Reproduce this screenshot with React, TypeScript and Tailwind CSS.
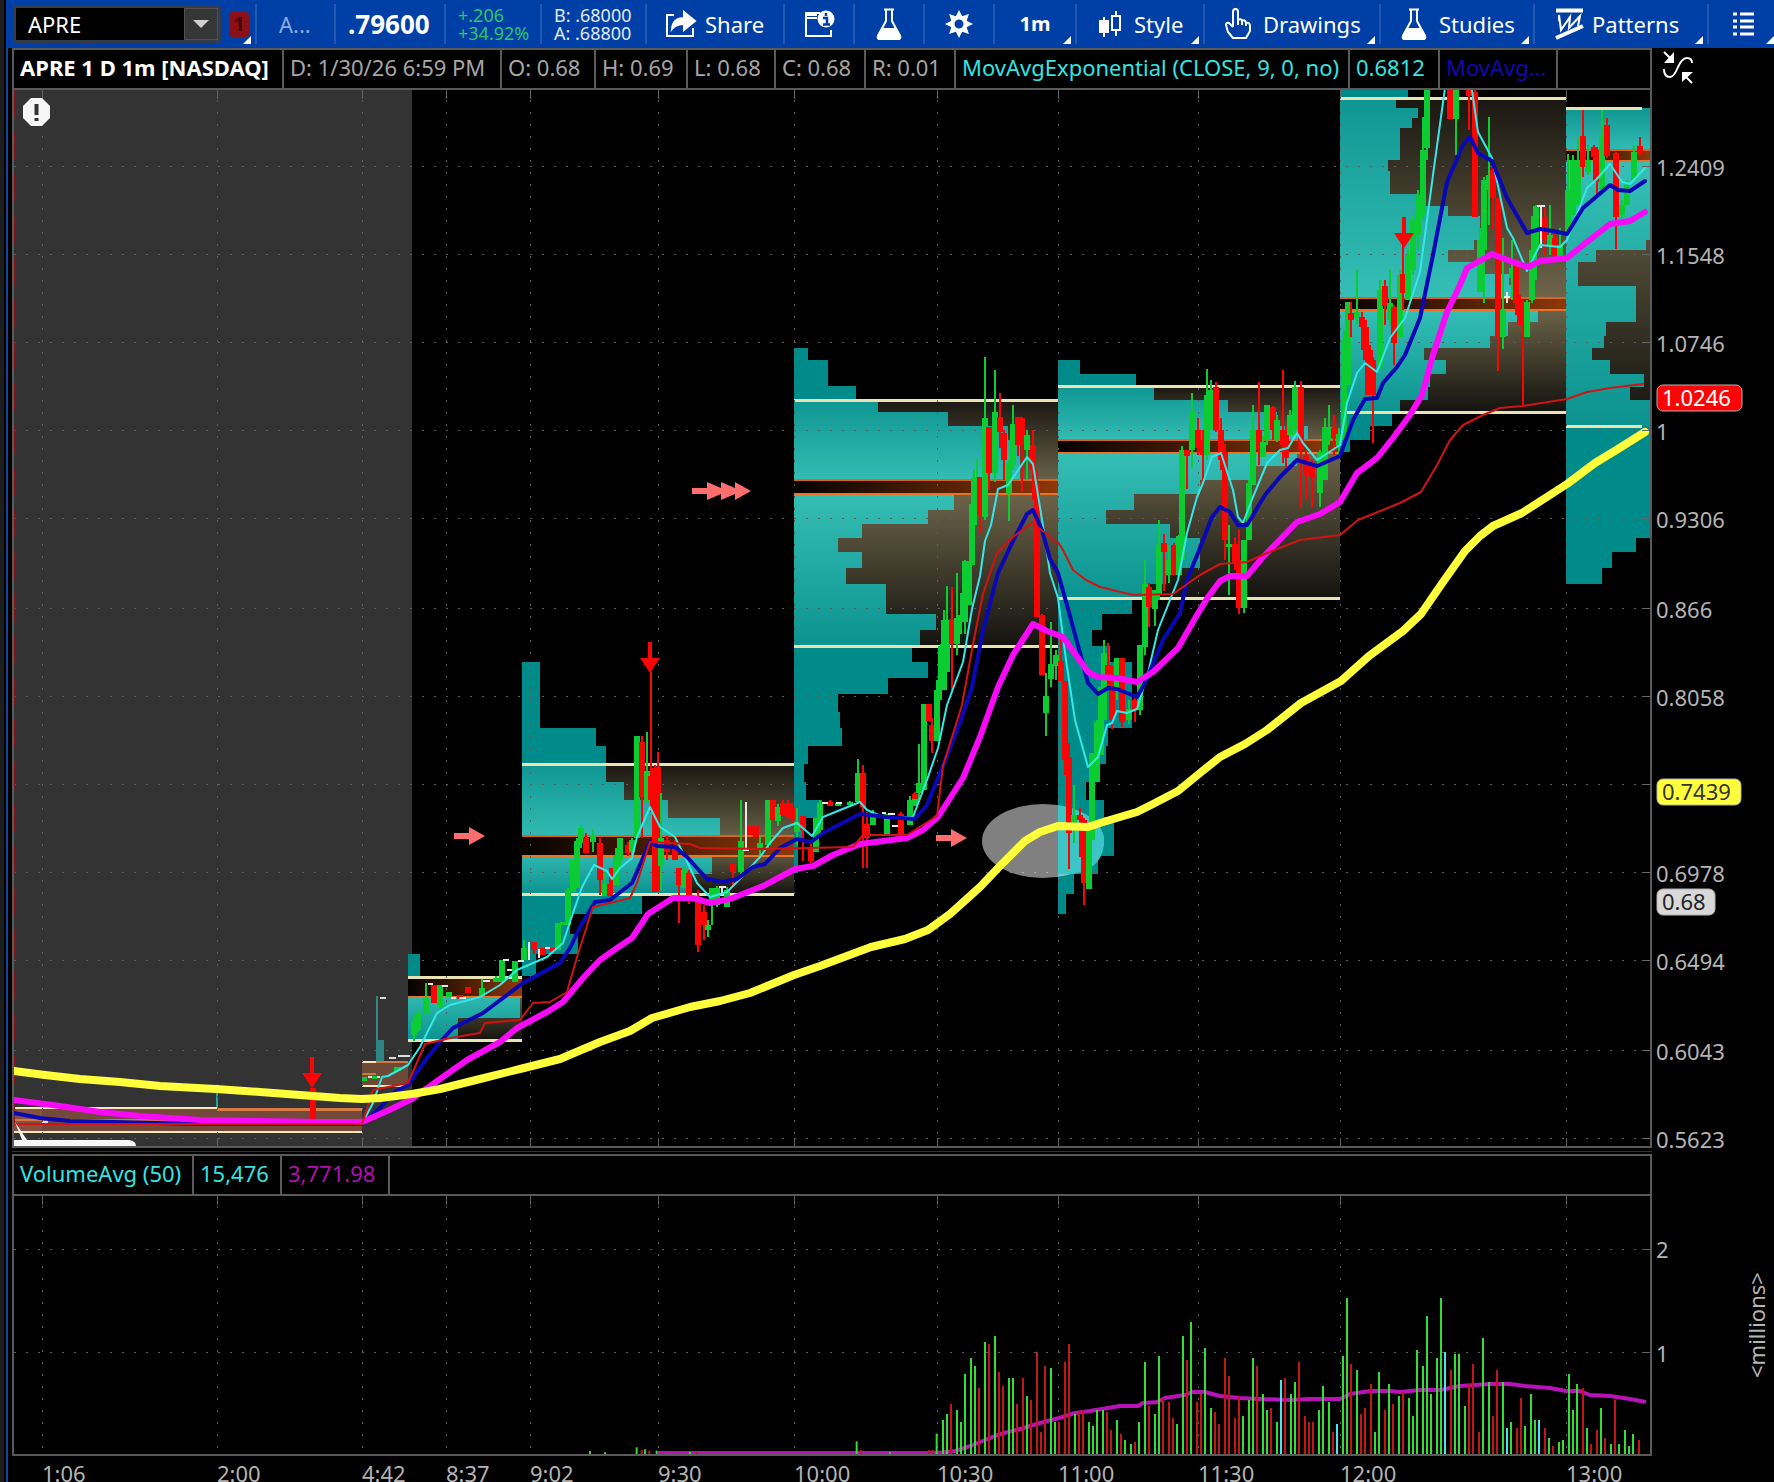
import type { ReactNode } from 'react';

type Row = [number, number];
type Profile = {
  id: string;
  x0: number;
  x1: number;
  vah: number;
  poc: [number, number];
  val: number;
  end: number;
  rows: Row[];
};

const GRID_X = [42, 217, 362, 446, 530, 658, 794, 937, 1058, 1198, 1340, 1566];
const TIME_LABELS = ['1:06', '2:00', '4:42', '8:37', '9:02', '9:30', '10:00', '10:30', '11:00', '11:30', '12:00', '13:00'];

const PRICE_TICKS: [number, string][] = [
  [166, '1.2409'],
  [254, '1.1548'],
  [342, '1.0746'],
  [430, '1'],
  [518, '0.9306'],
  [608, '0.866'],
  [696, '0.8058'],
  [784, ''],
  [872, '0.6978'],
  [960, '0.6494'],
  [1050, '0.6043'],
  [1138, '0.5623'],
];

// rows: [top, right edge] of each volume-at-price step
const PROFILES: Profile[] = [
  {
    id: 'p837', x0: 408, x1: 522, vah: 977, poc: [978, 997], val: 1040, end: 1040,
    rows: [[954, 420], [977, 408], [997, 520], [1018, 458]],
  },
  {
    id: 'p902', x0: 522, x1: 794, vah: 764, poc: [836, 856], val: 894, end: 976,
    rows: [[662, 540], [728, 596], [746, 606], [764, 606], [782, 624], [800, 668], [818, 720], [856, 712], [874, 690], [894, 642], [914, 570], [934, 578], [954, 536]],
  },
  {
    id: 'p1000', x0: 794, x1: 1058, vah: 400, poc: [480, 494], val: 646, end: 873,
    rows: [[348, 808], [360, 828], [386, 856], [400, 878], [412, 948], [426, 1008], [440, 1020], [494, 954], [510, 928], [524, 862], [538, 838], [552, 862], [568, 846], [584, 886], [614, 936], [630, 920], [646, 912], [662, 928], [678, 888], [694, 838], [712, 840], [728, 842], [746, 808], [764, 804], [782, 806], [800, 822], [818, 804], [838, 798]],
  },
  {
    id: 'p1100', x0: 1058, x1: 1340, vah: 386, poc: [440, 453], val: 598, end: 914,
    rows: [[360, 1080], [374, 1136], [386, 1154], [400, 1228], [412, 1277], [426, 1308], [453, 1297], [466, 1250], [480, 1200], [494, 1134], [510, 1106], [524, 1170], [538, 1200], [568, 1166], [584, 1150], [598, 1132], [614, 1102], [630, 1092], [646, 1110], [662, 1132], [728, 1108], [746, 1106], [764, 1100], [782, 1086], [800, 1104], [817, 1114], [856, 1098], [874, 1074], [894, 1066]],
  },
  {
    id: 'p1200', x0: 1340, x1: 1566, vah: 98, poc: [298, 310], val: 412, end: 452,
    rows: [[90, 1408], [98, 1396], [108, 1418], [118, 1412], [128, 1400], [160, 1388], [171, 1390], [194, 1418], [206, 1448], [216, 1480], [240, 1474], [250, 1448], [262, 1485], [274, 1509], [285, 1513], [310, 1538], [322, 1508], [336, 1490], [348, 1424], [360, 1446], [374, 1430], [387, 1428], [400, 1400], [412, 1392], [426, 1370], [440, 1350]],
  },
  {
    id: 'p1300', x0: 1566, x1: 1650, vah: 108, poc: [150, 161], val: 426, end: 584,
    rows: [[108, 1650], [161, 1650], [240, 1646], [250, 1596], [262, 1578], [286, 1636], [322, 1606], [336, 1604], [348, 1592], [360, 1610], [374, 1644], [387, 1630], [400, 1650], [426, 1650], [538, 1636], [552, 1612], [568, 1602]],
  },
];

// color x high bodyTop bodyBottom low
const CANDLES = `
g 414 1016 1021 1035 1041|g 418 1010 1013 1030 1032|g 426 983 998 1014 1014|r 434 985 985 1003 1003|g 440 985 985 1007 1007
g 449 992 992 997 997|r 460 995 995 999 999|r 468 987 987 993 993|g 482 979 988 996 996|g 496 976 978 982 982
g 502 960 960 982 982|g 515 961 961 982 982|g 524 940 948 960 960|r 534 942 942 950 954|r 543 948 948 955 955|r 552 948 948 951 951
g 558 923 923 950 950|g 563 922 922 925 925|g 568 888 890 925 925|g 573 860 860 892 892|g 577 838 841 888 888|g 581 825 828 843 848
r 586 833 838 853 853|g 593 829 835 842 852|r 600 838 843 880 895|g 605 870 884 896 896|r 610 868 884 896 896|r 612 868 868 878 884
g 616 848 855 885 885|g 620 838 838 860 865|r 628 842 845 853 856|g 632 838 840 852 858|g 637 736 736 838 838|r 642 736 742 797 838
g 647 732 771 802 802|r 651 672 776 800 812|r 655 765 768 892 892|r 658 752 767 890 892|g 661 793 838 866 890|r 667 836 840 852 860
r 675 840 845 860 860|r 679 868 868 885 923|g 684 868 870 888 888|r 689 870 873 898 904|r 698 890 897 945 952|r 704 905 912 925 940
g 708 920 925 930 937|g 712 888 888 900 925|g 717 886 888 905 907|g 727 887 890 907 907|r 733 863 864 872 885|g 741 800 841 872 875
r 750 826 826 835 835|r 756 826 826 837 837|g 760 836 843 850 855|g 768 800 800 845 850|r 773 800 800 820 820|g 778 804 807 821 826
r 783 800 803 815 815|r 788 800 803 818 818|r 792 803 808 820 826|g 797 808 822 832 845|r 803 816 816 830 861|r 811 843 849 861 863
g 816 818 818 852 852|g 820 800 803 830 836|r 830 800 802 806 806|g 838 802 803 806 806|g 850 801 802 805 805|g 858 759 773 802 802
r 863 765 773 807 868|r 867 812 824 838 868|g 873 810 816 825 825|g 887 814 814 836 836|r 901 812 814 835 835|g 910 796 800 825 825
g 915 793 798 806 806|r 915 792 794 799 799|g 919 744 783 793 800|g 924 704 704 790 790|r 929 704 704 721 721|r 932 718 725 741 753
g 937 680 690 741 741|g 941 644 646 690 700|g 944 610 620 690 690|g 947 586 620 672 672|r 952 587 619 644 690|g 957 573 618 644 655
g 961 593 615 622 634|g 965 560 561 622 634|g 969 561 561 605 605|g 972 494 504 565 565|g 974 470 478 525 525|g 977 459 480 504 504
r 980 477 477 515 533|g 985 357 418 517 520|r 989 427 427 473 490|g 995 370 412 473 482|r 1000 393 417 432 448|r 1004 430 433 460 480
g 1009 460 463 494 521|g 1013 405 424 465 470|r 1018 417 417 445 456|r 1022 417 418 445 492|g 1027 430 435 450 480|r 1033 430 445 470 500
r 1037 470 484 617 617|r 1042 614 615 675 675|g 1046 673 696 713 736|g 1051 622 664 679 687|g 1056 650 655 666 680
r 1061 640 661 681 681|r 1065 681 681 760 775|r 1069 743 757 833 869|g 1074 785 815 823 843|r 1080 808 815 820 857|r 1084 818 820 883 905
g 1089 825 825 889 889|g 1092 753 753 840 840|g 1097 720 722 782 782|g 1101 687 687 755 755|g 1104 640 653 720 720|r 1108 643 665 675 690
r 1112 665 675 720 729|g 1117 658 658 690 700|r 1122 658 658 722 727|g 1129 700 709 720 724|r 1135 694 700 710 722|g 1140 645 645 710 715
g 1145 560 584 647 655|r 1149 583 587 607 627|g 1155 590 590 609 626|g 1159 520 545 595 600|r 1164 534 543 552 591|g 1169 545 560 575 583
r 1174 543 545 575 575|g 1179 535 536 575 575|g 1182 446 450 560 560|r 1187 450 450 456 489|g 1192 393 412 450 468|r 1198 418 430 448 455
r 1203 430 440 455 485|g 1207 369 395 455 460|g 1211 380 390 430 430|r 1216 382 387 430 432|r 1221 418 430 460 470|r 1225 444 452 540 560
g 1229 525 544 547 595|r 1235 537 544 562 570|r 1239 530 560 608 614|g 1244 540 540 608 613|g 1249 480 483 540 540|g 1253 405 430 485 485
r 1259 382 430 450 465|g 1263 436 442 457 457|g 1267 405 405 440 445|r 1273 406 407 430 440|g 1277 415 420 440 442|r 1283 370 430 445 463
r 1286 426 433 458 467|g 1290 410 415 435 435|g 1295 381 387 430 435|r 1301 381 387 450 507|r 1306 450 455 475 500|r 1312 460 465 478 507
g 1320 450 452 493 507|g 1325 418 427 480 480|g 1329 405 427 440 445|r 1334 415 428 438 455|g 1339 428 434 446 455
g 1344 330 340 440 440|g 1348 302 302 385 385|r 1351 302 313 320 337|g 1357 270 312 318 325|r 1362 312 317 327 350|r 1366 320 327 360 395
r 1370 345 350 395 395|r 1373 357 360 395 443|g 1380 280 290 365 370|r 1385 280 286 306 325|g 1390 270 303 320 326|r 1394 305 307 343 365
g 1400 270 275 337 337|r 1403 245 274 293 310|g 1408 250 255 300 300|g 1413 215 220 270 275|g 1418 190 195 235 250|g 1423 117 150 215 220
g 1427 90 90 148 160|r 1450 90 90 119 119|g 1456 90 90 119 155|r 1469 90 90 96 130|r 1475 90 92 217 217|g 1480 228 240 292 292
g 1484 177 180 250 303|g 1489 117 175 190 225|r 1493 165 170 198 230|r 1498 198 198 337 371|g 1503 238 310 337 349|g 1512 240 268 278 300
r 1516 262 265 303 315|r 1520 295 300 325 325|r 1523 300 306 320 405|g 1527 300 302 337 337|g 1532 216 250 300 303|g 1536 205 206 250 280
r 1545 205 217 240 255|g 1550 205 235 245 255|r 1555 234 238 255 258|g 1560 228 245 256 258|g 1568 154 190 235 235|g 1573 155 160 215 215
g 1578 138 160 205 205|r 1583 110 136 167 177|g 1588 145 160 172 175|r 1594 145 147 157 180|r 1597 147 150 182 195|g 1602 110 135 190 190
r 1607 118 125 156 158|r 1616 152 153 217 249|g 1622 200 205 215 218|g 1627 180 185 205 205|g 1634 146 152 180 180|r 1640 137 146 154 156`
  .trim()
  .split(/[|\n]/)
  .map((c) => c.split(' '));

const YELLOW = '14,1071 45,1075 80,1079 120,1082 160,1086 216,1089 260,1092 300,1095 340,1098 362,1099 380,1098 412,1094 440,1089 480,1079 520,1069 560,1059 600,1042 630,1031 652,1018 690,1007 720,1001 750,993 794,975 820,966 871,947 905,939 928,930 950,914 980,887 1000,866 1025,841 1040,832 1058,826 1088,827 1100,823 1120,817 1137,812 1153,804 1178,791 1200,773 1220,757 1245,744 1267,730 1301,703 1341,681 1369,656 1403,631 1421,614 1443,582 1465,551 1480,536 1493,526 1522,513 1567,484 1595,463 1618,449 1645,432';
const MAGENTA = '14,1100 60,1106 100,1112 140,1116 200,1120 260,1121 320,1122 362,1122 385,1112 412,1099 440,1079 467,1060 500,1042 517,1028 547,1012 563,1002 583,978 600,960 617,948 632,938 648,914 673,898 693,898 710,903 730,899 763,886 795,869 813,866 833,855 860,844 907,838 923,830 938,817 963,778 980,737 998,687 1013,655 1033,624 1047,631 1063,637 1078,658 1088,672 1098,677 1117,678 1137,682 1153,672 1178,648 1197,615 1208,597 1220,581 1230,576 1247,576 1263,557 1297,522 1320,514 1340,502 1357,473 1377,458 1393,438 1410,415 1422,395 1433,355 1447,312 1460,285 1467,268 1492,254 1513,262 1528,267 1540,261 1567,258 1587,242 1610,224 1630,221 1645,212';
const BLUE = '14,1113 40,1118 70,1121 200,1124 300,1124 362,1124 380,1108 395,1092 408,1085 427,1058 440,1042 453,1028 483,1013 523,983 560,963 570,948 580,927 595,902 610,900 632,883 650,842 657,846 675,847 687,857 707,879 723,882 737,879 753,867 765,864 780,848 797,839 811,842 823,833 860,814 887,817 915,819 927,805 940,773 960,723 972,687 983,630 998,573 1013,541 1027,514 1033,510 1042,530 1050,559 1058,573 1070,616 1080,653 1088,683 1098,694 1108,688 1117,689 1137,697 1145,683 1163,640 1180,613 1187,580 1200,548 1212,517 1220,507 1230,512 1238,525 1247,525 1265,495 1280,477 1297,460 1317,466 1340,456 1353,420 1365,399 1377,398 1383,383 1397,367 1405,355 1420,318 1433,255 1447,182 1463,145 1470,137 1478,153 1492,161 1507,198 1527,233 1540,229 1553,231 1567,234 1583,208 1610,185 1618,190 1630,191 1645,181';
const CYAN = '365,1118 373,1103 382,1077 388,1076 408,1065 420,1047 437,1013 450,1005 480,997 500,985 517,970 547,957 563,943 573,913 582,887 594,865 607,871 612,879 620,868 632,858 637,837 650,807 660,827 675,837 683,853 697,883 710,897 727,892 737,882 760,857 770,843 783,828 797,823 812,836 823,817 860,802 867,810 883,817 913,817 927,780 938,748 947,705 963,662 972,609 980,576 985,541 991,525 998,489 1008,485 1027,457 1033,464 1043,526 1050,573 1058,598 1066,660 1075,720 1088,767 1098,757 1107,725 1112,723 1117,711 1127,713 1137,709 1148,673 1158,630 1178,580 1187,533 1197,497 1203,483 1212,457 1221,453 1233,490 1238,517 1243,523 1253,497 1267,463 1280,450 1288,448 1297,433 1303,443 1317,460 1340,445 1347,403 1357,373 1365,363 1377,372 1390,338 1405,318 1420,272 1433,175 1445,88 1455,60 1468,60 1472,90 1478,132 1492,158 1507,228 1513,238 1527,271 1540,245 1560,247 1567,240 1587,188 1595,181 1610,164 1622,182 1630,184 1645,168';
const VWAP = '14,1124 362,1124 373,1090 408,1083 425,1044 450,1038 480,1033 485,1023 520,1020 533,1003 550,1002 567,992 577,957 593,907 610,903 630,898 637,883 650,842 690,844 700,848 760,849 853,847 863,835 907,835 937,816 943,766 962,705 973,644 983,594 997,553 1013,537 1032,523 1047,534 1053,541 1058,542 1063,550 1073,570 1086,580 1100,587 1133,595 1173,594 1200,575 1220,564 1247,562 1267,553 1300,540 1340,535 1358,520 1400,503 1421,492 1437,465 1450,440 1463,425 1483,415 1500,408 1523,406 1567,399 1587,392 1610,388 1643,384';
const VOLUME_AVG = '658,1453 937,1453 955,1451 970,1446 985,1440 1000,1434 1020,1429 1040,1423 1059,1418 1075,1413 1090,1411 1120,1406 1138,1406 1143,1403 1157,1402 1165,1398 1185,1395 1192,1392 1205,1392 1220,1396 1240,1398 1260,1399 1290,1400 1310,1399 1340,1399 1350,1394 1370,1391 1390,1391 1400,1392 1420,1390 1440,1390 1460,1386 1490,1384 1510,1384 1525,1386 1550,1388 1566,1391 1580,1391 1590,1395 1610,1396 1630,1399 1646,1402';

// color, x, height, in thirds of a chart unit from x=900
const VOLUME = `g110 61 g129 102 g141 120 r153 150 g171 132 g183 96 g195 240 g213 288 g225 264 r237 198 g255 336 r267 330 g285 354 r297 246 r309 204 g327 228 g339 228 r351 150 r369 228 g381 174 r393 162 r411 306 r423 66 r435 264 g453 258 g465 96 r477 96 r495 276 r507 330 g525 120 r537 127 r549 132 g567 96 g579 84 g591 132 g609 132 r621 126 r633 72 g651 102 r663 60 g675 42 g693 30 r705 36 g717 96 g735 276 r747 144 g765 120 g777 294 r789 168 r807 156 r819 108 g831 90 g849 354 r861 282 g873 396 r891 156 r903 180 g915 318 g933 138 r945 126 r957 90 r975 288 r987 234 r1005 108 r1017 174 g1029 114 g1047 162 g1059 288 r1071 264 g1089 180 g1101 132 r1113 138 g1131 96 c1143 222 r1155 228 g1173 180 g1185 216 r1197 276 r1215 114 r1227 96 r1239 96 g1257 132 g1269 204 g1287 156 r1299 66 c1311 90 g1329 294 g1341 468 r1353 270 g1371 252 r1383 120 r1395 138 r1413 210 g1425 66 g1437 246 r1455 132 g1467 210 r1479 150 g1497 174 r1509 186 g1527 168 g1539 114 g1551 312 g1569 264 g1581 414 g1593 180 g1611 288 g1623 468 c1635 306 r1653 252 g1665 300 g1677 300 g1695 144 r1707 210 r1719 270 r1737 66 g1749 348 g1767 216 r1779 114 r1791 252 g1809 216 c1821 78 g1833 96 r1851 78 r1863 168 g1875 84 g1893 180 g1905 102 c1917 102 r1935 78 g1947 48 r1959 24 g1977 36 g1989 42 g2007 240 g2019 132 g2031 210 r2049 198 g2061 78 r2073 30 r2091 72 g2103 138 r2115 48 g2133 30 r2145 162 g2157 30 g2175 72 g2187 24 g2199 60 r2217 42 r87 12 r99 12 g-930 9 g-885 5 g-790 20 r-775 12 g-765 14 r-752 10 g-730 10 g-630 6 r-610 7 g-130 38 r-118 12 g-30 5`
  .split(/ (?=[grc])/)
  .map((b) => {
    const [x, h] = b.slice(1).split(' ').map(Number);
    return { color: b[0], x: 900 + x / 3, h: h / 3 };
  });

const CANDLE_FILL: Record<string, string> = { g: '#0ccc33', r: '#fa0505' };
const VOLUME_FILL: Record<string, string> = { g: '#33dd33', r: '#c01818', c: '#4be3f0' };

function MoreMark() {
  return (
    <svg className="absolute right-1 bottom-0 size-[8px]" viewBox="0 0 8 8">
      <path d="M8 0V8H0Z" fill="#fff" />
    </svg>
  );
}

function ToolButton({ className, label, icon, text, more }: { className: string; label: string; icon?: ReactNode; text?: string; more?: boolean }) {
  return (
    <button type="button" aria-label={label} className={`relative flex h-10 shrink-0 items-center border-r-2 border-[#2357b0] text-white ${className}`}>
      {icon}
      {text && <span>{text}</span>}
      {more && <MoreMark />}
    </button>
  );
}

function FlaskIcon() {
  return (
    <svg className="h-[32px] w-[26px]" viewBox="0 0 26 32" fill="none" stroke="#fff" strokeWidth="2">
      <path d="M8 1.5H18M10 2V13L2 28Q1 31 4 31H22Q25 31 24 28L16 13V2" />
      <path d="M6 21H20L24 28Q25 31 22 31H4Q1 31 2 28Z" fill="#fff" />
    </svg>
  );
}

function Toolbar() {
  return (
    <header className="flex h-12 items-center overflow-hidden bg-[#0040a6] pl-[7px]">
      <div className="flex h-[38px] w-[208px] shrink-0 items-center rounded-sm border-[3px] border-[#333b4c] bg-black">
        <input aria-label="Symbol" defaultValue="APRE" className="w-0 flex-1 bg-transparent pl-3 text-[22px] text-white outline-none" />
        <button type="button" aria-label="Symbol list" className="flex h-[32px] w-[34px] items-center justify-center border border-[#505050] bg-[#363636]">
          <svg className="h-[8px] w-[16px]" viewBox="0 0 16 8">
            <path d="M0 0H16L8 8Z" fill="#d0d0d0" />
          </svg>
        </button>
      </div>
      <button type="button" aria-label="Link group 1" className="relative flex h-10 w-[36px] shrink-0 items-center border-r-2 border-[#2357b0] pl-2">
        <span className="flex h-[25px] w-[20px] items-center justify-center rounded bg-[#8c1016] text-[20px] font-bold text-[#43050c]">1</span>
        <MoreMark />
      </button>
      <span className="flex h-10 w-[79px] shrink-0 items-center border-r-2 border-[#2357b0] pl-[22px] text-[#8fa9dc]">A...</span>
      <span className="flex h-10 w-[110px] shrink-0 items-center border-r-2 border-[#2357b0] pl-3 text-[26px] font-bold text-white">.79600</span>
      <span className="flex h-10 w-[96px] shrink-0 flex-col justify-center border-r-2 border-[#2357b0] pl-3 text-[18px] leading-[18px] text-[#2fc46b]">
        <span>+.206</span>
        <span>+34.92%</span>
      </span>
      <span className="flex h-10 w-[105px] shrink-0 flex-col justify-center border-r-2 border-[#2357b0] pl-3 text-[18px] leading-[18px] text-[#e0e8f8]">
        <span>B: .68000</span>
        <span>A: .68800</span>
      </span>
      <ToolButton
        className="w-[138px] gap-2 pl-[18px]"
        label="Share"
        text="Share"
        icon={
          <svg className="h-[28px] w-[32px]" viewBox="0 0 32 28" fill="none" stroke="#fff" strokeWidth="2">
            <path d="M9 5H2V26H28V18" />
            <path d="M7 19Q8 8 19 8V2L30 11L19 20V14Q11 14 7 19Z" fill="#fff" />
          </svg>
        }
      />
      <ToolButton
        className="w-[70px] justify-center"
        label="Chart info"
        icon={
          <svg className="h-[28px] w-[32px]" viewBox="0 0 32 28" fill="none" stroke="#fff" strokeWidth="2">
            <path d="M17 3H3V26H28V20M3 8H14M3 5H14" />
            <circle cx="23" cy="9" r="8.500" fill="#fff" stroke="none" />
            <path d="M23 3V6M20 8H24V14M20 14.500H27" stroke="#0040a6" strokeWidth="2.500" />
          </svg>
        }
      />
      <ToolButton className="w-[70px] justify-center" label="Study lab" icon={<FlaskIcon />} />
      <ToolButton
        className="w-[70px] justify-center"
        label="Settings"
        icon={
          <svg className="size-[28px]" viewBox="-14 -14 28 28" fill="#fff">
            {[0, 45, 90, 135, 180, 225, 270, 315].map((a) => (
              <path key={a} d="M-3.500 -7L0 -14L3.500 -7Z" transform={`rotate(${a})`} />
            ))}
            <circle r="6.500" fill="none" stroke="#fff" strokeWidth="4" />
          </svg>
        }
      />
      <ToolButton className="w-[82px] justify-center text-[20px] font-bold" label="Time frame 1 minute" text="1m" more />
      <ToolButton
        className="w-[128px] gap-3 pl-[22px]"
        label="Style"
        text="Style"
        more
        icon={
          <svg className="h-[28px] w-[23px]" viewBox="0 0 23 28" fill="none" stroke="#fff" strokeWidth="2">
            <path d="M5 7V27M17 1V6M17 20V26" />
            <path d="M1 11H9V22H1Z" fill="#fff" />
            <path d="M13 6H21V20H13Z" />
          </svg>
        }
      />
      <ToolButton
        className="w-[176px] gap-3 pl-[20px]"
        label="Drawings"
        text="Drawings"
        more
        icon={
          <svg className="h-[32px] w-[26px]" viewBox="0 0 26 32" fill="none" stroke="#fff" strokeWidth="2" strokeLinejoin="round">
            <path d="M8 19V4Q8 1 10.500 1Q13 1 13 4V12Q16 10 17 13Q20 11 21 15Q25 14 25 18V23L21 30H8L3 24L1 17Q1 14 4 15L8 19M13 12V17M17 13V17M21 15V18" />
          </svg>
        }
      />
      <ToolButton className="w-[154px] gap-3 pl-[20px]" label="Studies" text="Studies" more icon={<FlaskIcon />} />
      <ToolButton
        className="w-[174px] gap-2 pl-[20px]"
        label="Patterns"
        text="Patterns"
        more
        icon={
          <svg className="h-[32px] w-[29px]" viewBox="0 0 29 32" fill="none" stroke="#fff" strokeWidth="2">
            <path d="M1 2.500H28M1 30L28 18" strokeWidth="4" />
            <path d="M4 7L6 22L15 9L14 20L25 8L23 18M4 7V13" />
          </svg>
        }
      />
      <button type="button" aria-label="Menu" className="relative flex h-10 flex-1 items-center pl-6">
        <svg className="h-[24px] w-[21px]" viewBox="0 0 21 24" stroke="#fff" strokeWidth="3">
          <path d="M0 2H4M7 2H21M0 9H4M7 9H21M0 15H4M7 15H21M0 22H4M7 22H21" />
        </svg>
        <svg className="absolute right-0 bottom-0 size-[8px]" viewBox="0 0 8 8">
          <path d="M8 0V8H0Z" fill="#fff" />
        </svg>
      </button>
    </header>
  );
}

function StatusBar() {
  const cell = 'flex shrink-0 items-center overflow-hidden border-r-2 border-[#5a5a5a] pb-1 pl-[6px] whitespace-nowrap';
  return (
    <div className="flex h-[42px] bg-black text-[#a6a6a6]">
      <div className="flex min-w-0 flex-1 border-2 border-[#5a5a5a]">
        <h1 className={`${cell} w-[270px] font-bold text-white`}>APRE 1 D 1m [NASDAQ]</h1>
        <span className={`${cell} w-[218px]`}>D: 1/30/26 6:59 PM</span>
        <span className={`${cell} w-[94px]`}>O: 0.68</span>
        <span className={`${cell} w-[92px]`}>H: 0.69</span>
        <span className={`${cell} w-[88px]`}>L: 0.68</span>
        <span className={`${cell} w-[90px]`}>C: 0.68</span>
        <span className={`${cell} w-[90px]`}>R: 0.01</span>
        <span className={`${cell} w-[394px] text-[#35e3e0]`}>MovAvgExponential (CLOSE, 9, 0, no)</span>
        <span className={`${cell} w-[90px] text-[#35e3e0]`}>0.6812</span>
        <span className={`${cell} w-[118px] text-[#1408b0]`}>MovAvg...</span>
      </div>
      <button type="button" aria-label="Auto scale" className="flex w-[122px] items-center pb-1 pl-[10px]">
        <svg className="h-[36px] w-[32px]" viewBox="0 0 32 36" fill="none" stroke="#fff" strokeWidth="2">
          <path d="M2 20Q2 28 8 28Q12 28 16 18Q20 9 25 9Q30 9 30 14" />
          <path d="M2 3L10 11M30 34L22 26" />
          <path d="M12 3V14H2ZM20 23H31L20 33Z" fill="#fff" stroke="none" />
        </svg>
      </button>
    </div>
  );
}

function ProfileShape({ p }: { p: Profile }) {
  const span = p.val - p.vah;
  const poc = (p.poc[0] + p.poc[1]) / 2;
  const mid = (poc - p.vah) / span;
  const lineEnd = Math.min(p.x1, 1642);
  const grad = { gradientUnits: 'userSpaceOnUse' as const, x1: 0, x2: 0, y1: p.vah, y2: p.val };
  return (
    <g shapeRendering="crispEdges">
      <defs>
        <linearGradient id={`${p.id}-teal`} {...grad}>
          <stop offset="0" stopColor="#0f9693" />
          <stop offset={mid} stopColor="#36c0b6" />
          <stop offset="1" stopColor="#0c9390" />
        </linearGradient>
        <linearGradient id={`${p.id}-value`} {...grad}>
          <stop offset="0" stopColor="#1a1712" />
          <stop offset={mid} stopColor="#70674b" />
          <stop offset="1" stopColor="#14130f" />
        </linearGradient>
        <linearGradient id={`${p.id}-poc`} x1="0" x2="1">
          <stop offset="0" stopColor="#050200" />
          <stop offset="1" stopColor="#8e380a" />
        </linearGradient>
      </defs>
      <rect x={p.x0} y={p.vah} width={p.x1 - p.x0} height={span} fill={`url(#${p.id}-value)`} />
      {p.rows.map(([y, x], i) => {
        const bottom = p.rows[i + 1]?.[0] ?? p.end;
        const inside = y >= p.vah && y < p.val;
        return <rect key={y} x={p.x0} y={y} width={x - p.x0} height={bottom - y} fill={inside ? `url(#${p.id}-teal)` : '#008b8b'} />;
      })}
      <rect x={p.x0} y={p.poc[0]} width={p.x1 - p.x0} height={p.poc[1] - p.poc[0]} fill={`url(#${p.id}-poc)`} />
      <path d={`M${p.x0} ${p.poc[0]}H${p.x1}`} stroke="#d9641f" strokeWidth="2" />
      <path d={`M${p.x0} ${p.poc[1]}H${p.x1}`} stroke="#e87428" strokeWidth="2" />
      <path d={`M${p.x0} ${p.vah + 0.5}H${lineEnd}M${p.x0} ${p.val + 0.5}H${lineEnd}`} stroke="#e9e3b4" strokeWidth="3" />
    </g>
  );
}

function OvernightProfile() {
  return (
    <g shapeRendering="crispEdges">
      <rect x="14" y="1108" width="348" height="25" fill="#73493a" />
      <rect x="14" y="1108" width="28" height="25" fill="#855241" />
      <rect x="362" y="1062" width="46" height="25" fill="#6d4a38" />
      <rect x="376" y="1040" width="8" height="22" fill="#2f8583" />
      <rect x="376" y="996" width="2" height="44" fill="#3a8583" />
      <rect x="216" y="1092" width="2" height="16" fill="#1fa79f" />
      <path d="M217 1109H362" stroke="#d97b45" strokeWidth="3" />
      <path d="M14 1120H217M362 1062H408M362 1074H376" stroke="#cf7a45" strokeWidth="2" />
      <path d="M14 1108H217M14 1132H362M362 1062H376M362 1086H408" stroke="#f6e8b8" strokeWidth="2" />
      <path d="M380 998H386M389 1058H396M398 1056H410M42 1122H48M368 1077H380" stroke="#ddd" strokeWidth="2" />
      <rect x="362" y="1077" width="5" height="4" fill="#0ccc33" />
      <rect x="372" y="1076" width="5" height="3" fill="#0ccc33" />
      <rect x="394" y="1067" width="7" height="4" fill="#0ccc33" />
    </g>
  );
}

function DownArrow({ x, y }: { x: number; y: number }) {
  return <path d={`M${x - 2} ${y}h4v16h8l-10 15l-10 -15h8Z`} fill="#fa0505" />;
}

function RightArrow({ x, y }: { x: number; y: number }) {
  return <path d={`M${x} ${y - 3}h15v-6l16 9l-16 9v-6h-15Z`} fill="#ff6d6d" />;
}

function PriceTag({ y, text, width, fill, color }: { y: number; text: string; width: number; fill: string; color: string }) {
  return (
    <g>
      <rect x="1657" y={y - 13} width={width} height="26" rx="6" fill={fill} stroke="#b8b0b0" />
      <text x="1662" y={y + 8} fill={color}>{text}</text>
    </g>
  );
}

function PriceChart() {
  return (
    <svg className="block h-auto w-full bg-black text-[22px]" viewBox="12 90 1762 1064" role="img" aria-label="APRE one minute price chart">
      <clipPath id="plot">
        <rect x="13" y="90" width="1637" height="1056" />
      </clipPath>
      <g clipPath="url(#plot)">
        <rect x="13" y="90" width="399" height="1056" fill="#333" />
        {PROFILES.map((p) => (
          <ProfileShape key={p.id} p={p} />
        ))}
        <OvernightProfile />
        <g stroke="#5e5e5e" strokeDasharray="2 10" shapeRendering="crispEdges">
          {PRICE_TICKS.map(([y]) => (
            <path key={y} d={`M14 ${y + 0.5}H1650`} />
          ))}
          {GRID_X.map((x) => (
            <path key={x} d={`M${x + 0.5} 100V1146`} />
          ))}
        </g>
        <path d={GRID_X.map((x) => `M${x + 0.5} 90v9M${x + 0.5} 1138v8`).join('')} stroke="#606060" />
        <ellipse cx="1043" cy="841" rx="61" ry="37" fill="#fff" fillOpacity="0.5" />
        <path d="M1058 805Q1104 815 1104 841Q1104 868 1074 874H1058Z" fill="#3cc5c5" />
        <path d="M14 90V1146" stroke="#8a1515" strokeWidth="2" strokeDasharray="28 14" />
        <g shapeRendering="crispEdges">
          {CANDLES.map(([c, x, hi, top, bottom, lo], i) => (
            <g key={i} fill={CANDLE_FILL[c]}>
              <rect x={+x - 1} y={+hi} width="2" height={+lo - +hi} />
              <rect x={+x - 3} y={+top} width="6" height={+bottom - +top} />
            </g>
          ))}
          <rect x="310" y="1088" width="6" height="32" fill="#fa0505" />
          <path d="M745.5 802V850M743 850H749M1541 206V248M1537 206H1545M1507 292V303M1504 297H1510M529 942V960M539 949V958M722 886V896M719 887H726" stroke="#e6e6e6" strokeWidth="2" fill="none" />
          <path d="M428 984H433M442 986H448M451 998H456M459 998H466M483 981H490M503 960H509M507 970H512M518 961H524M545 948H550M822 803H828M836 803H842M888 814H895M892 826H898M882 813H886" stroke="#e6e6e6" strokeWidth="2" />
        </g>
        <g fill="none" strokeLinejoin="round" strokeLinecap="round">
          <polyline points={CYAN} stroke="#35e8e8" strokeWidth="2" />
          <polyline points={BLUE} stroke="#0a08b4" strokeWidth="4" />
          <polyline points={MAGENTA} stroke="#f80af8" strokeWidth="6" />
          <polyline points={VWAP} stroke="#d01414" strokeWidth="2" />
          <polyline points={YELLOW} stroke="#ffff3c" strokeWidth="8" />
        </g>
        <DownArrow x={650} y={642} />
        <DownArrow x={312} y={1057} />
        <DownArrow x={1404} y={217} />
        <RightArrow x={454} y={836} />
        <RightArrow x={936} y={838} />
        <path d="M692 488h15v-6l14 6v-6l14 6v-6l16 9l-16 9v-6l-14 6v-6l-14 6v-6h-15Z" fill="#ff6d6d" />
        <path d="M15 1122L27 1140H129Q136 1141 136 1146H14V1140H22Z" fill="#f6f6f6" />
        <path d="M31 98H42L50 106V118L42 126H31L23 118V106Z" fill="#f6f6f6" />
        <path d="M36.500 104V115M36.500 118V121" stroke="#333" strokeWidth="4" />
      </g>
      <path d="M13 90V1147H1651V90" fill="none" stroke="#5a5a5a" strokeWidth="2" />
      <path d="M12 1151.500H1652" stroke="#333" />
      {PRICE_TICKS.map(([y, label]) => (
        <g key={y}>
          <path d={`M1642 ${y + 0.5}H1650`} stroke="#666" />
          <text x="1656" y={y + 10} fill="#b4b4b4">{label}</text>
        </g>
      ))}
      <PriceTag y={398} text="1.0246" width={85} fill="#fa0505" color="#fff" />
      <PriceTag y={792} text="0.7439" width={84} fill="#ffff3c" color="#333" />
      <PriceTag y={902} text="0.68" width={58} fill="#d8d8d8" color="#222" />
    </svg>
  );
}

function VolumeHeader() {
  const cell = 'flex items-center border-r-2 border-[#5a5a5a] pb-1 pl-[6px]';
  return (
    <div className="flex h-[42px] bg-black pr-[122px]">
      <div className="flex flex-1 border-2 border-[#5a5a5a]">
        <h2 className={`${cell} w-[180px] text-[#35e3e0]`}>VolumeAvg (50)</h2>
        <span className={`${cell} w-[88px] text-[#35e3e0]`}>15,476</span>
        <span className={`${cell} w-[108px] text-[#b010b0]`}>3,771.98</span>
      </div>
    </div>
  );
}

function VolumeChart() {
  return (
    <svg className="block h-auto w-full bg-black text-[22px]" viewBox="12 1196 1762 286" role="img" aria-label="Volume in millions">
      <g stroke="#5e5e5e" strokeDasharray="2 10" shapeRendering="crispEdges">
        <path d="M14 1249.500H1650M14 1352.500H1650" />
        {GRID_X.map((x) => (
          <path key={x} d={`M${x + 0.5} 1206V1454`} />
        ))}
      </g>
      <path d={GRID_X.map((x) => `M${x + 0.5} 1196v9`).join('') + 'M1642 1249.500H1650M1642 1352.500H1650'} stroke="#606060" />
      <polyline points={VOLUME_AVG} fill="none" stroke="#b812b8" strokeWidth="4" strokeLinejoin="round" />
      <g>
        {VOLUME.map((b) => (
          <rect key={b.x} x={b.x - 1} y={1454 - b.h} width="2" height={b.h} fill={VOLUME_FILL[b.color]} />
        ))}
      </g>
      <path d="M13 1196V1455H1651V1196" fill="none" stroke="#5a5a5a" strokeWidth="2" />
      <g fill="#b4b4b4">
        <text x="1656" y="1258">2</text>
        <text x="1656" y="1362">1</text>
        {GRID_X.map((x, i) => (
          <text key={x} x={x} y="1482">{TIME_LABELS[i]}</text>
        ))}
        <text transform="translate(1765 1378) rotate(-90)">&lt;millions&gt;</text>
      </g>
    </svg>
  );
}

export default function App() {
  return (
    <div className="flex min-h-screen overflow-hidden bg-black font-['Noto_Sans','Open_Sans',sans-serif] text-[22px]">
      <div className="w-[6px] shrink-0 border-r-2 border-black bg-[#1e1e1e]" />
      <div className="min-w-0 flex-1">
        <Toolbar />
        <main className="border-l-2 border-[#1a4396] pl-1">
          <StatusBar />
          <PriceChart />
          <VolumeHeader />
          <VolumeChart />
        </main>
      </div>
    </div>
  );
}
